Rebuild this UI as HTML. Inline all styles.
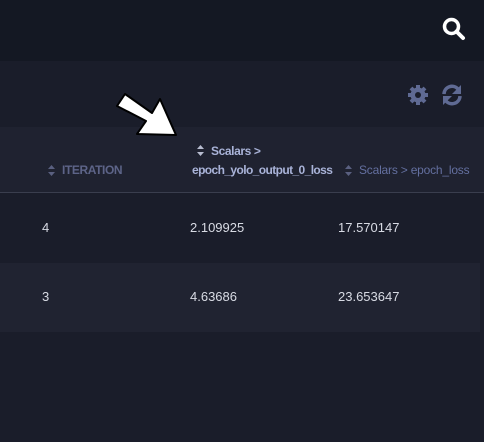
<!DOCTYPE html>
<html><head><style>
body{margin:0;width:484px;height:442px;background:#1a1d2a;font-family:"Liberation Sans",sans-serif;position:relative;overflow:hidden}
.top{position:absolute;left:0;top:0;width:484px;height:61px;background:#141823}
.hdr{position:absolute;left:0;top:127px;width:484px;height:65px;background:#1f2230;border-bottom:1px solid #3a3e4e}
.r2{position:absolute;left:0;top:263px;width:480px;height:69px;background:#202331}
.t{position:absolute;font-size:13px;color:#d8dbe4;white-space:nowrap}
.h{position:absolute;font-size:12px;font-weight:bold;color:#5d6488;white-space:nowrap;letter-spacing:-0.4px}
.hb{color:#a9b3d8}
.s{position:absolute;width:7px;height:11px}
</style></head><body>
<div class="top"></div>
<svg style="position:absolute;left:441px;top:16px" width="26" height="26" viewBox="0 0 26 26"><circle cx="10.5" cy="10.5" r="7" fill="none" stroke="#fff" stroke-width="3.5"/><path d="M15.5 15.5 L22 22" stroke="#fff" stroke-width="4" stroke-linecap="round"/></svg>
<svg style="position:absolute;left:406px;top:83px" width="24" height="24" viewBox="0 0 24 24"><g fill="#5f6a93"><circle cx="12" cy="12" r="7.5"/><g stroke="#5f6a93" stroke-width="4"><path d="M12 2v20M2 12h20M5 5l14 14M19 5L5 19"/></g></g><circle cx="12" cy="12" r="3" fill="#1a1d2a"/></svg>
<svg style="position:absolute;left:440px;top:83px" width="24" height="24" viewBox="0 0 24 24"><g fill="none" stroke="#5f6a93" stroke-width="3.5"><path d="M4 11a8 8 0 0 1 14-5"/><path d="M20 13a8 8 0 0 1-14 5"/></g><path d="M21 2v9h-9z" fill="#5f6a93"/><path d="M3 22v-9h9z" fill="#5f6a93"/></svg>
<div class="hdr"></div>
<svg style="position:absolute;left:0;top:0" width="484" height="200"><polygon points="125,94 152,113 160,99 176,135 137,134 146,121 117,106" fill="#fff" stroke="#000" stroke-width="2" stroke-linejoin="round"/></svg>
<svg class="s" style="left:48px;top:165px" viewBox="0 0 7 11"><path d="M3.5 0L7 4H0zM3.5 11L7 7H0z" fill="#5a6080"/></svg>
<div class="h" style="left:62px;top:163px">ITERATION</div>
<svg class="s" style="left:197px;top:145px" viewBox="0 0 7 11"><path d="M3.5 0L7 4H0zM3.5 11L7 7H0z" fill="#b8bdd0"/></svg>
<div class="h hb" style="left:211px;top:144px">Scalars &gt;</div>
<div class="h hb" style="left:192px;top:163px;letter-spacing:-0.6px">epoch_yolo_output_0_loss</div>
<svg class="s" style="left:345px;top:165px" viewBox="0 0 7 11"><path d="M3.5 0L7 4H0zM3.5 11L7 7H0z" fill="#5a6080"/></svg>
<div class="h" style="left:359px;top:163px;color:#6470a0;font-weight:normal;letter-spacing:-0.2px">Scalars &gt; epoch_loss</div>
<div class="t" style="left:42px;top:220px">4</div>
<div class="t" style="left:190px;top:220px">2.109925</div>
<div class="t" style="left:338px;top:220px">17.570147</div>
<div class="r2"></div>
<div class="t" style="left:42px;top:289px">3</div>
<div class="t" style="left:190px;top:289px">4.63686</div>
<div class="t" style="left:338px;top:289px">23.653647</div>
</body></html>
